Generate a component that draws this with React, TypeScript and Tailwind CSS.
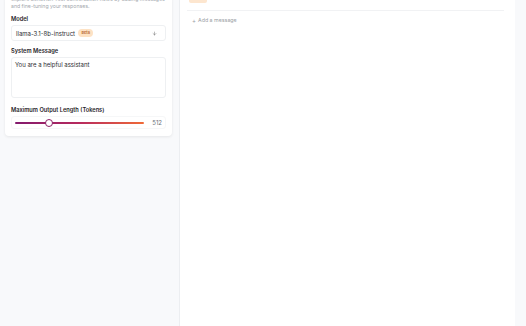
import { ArrowDown } from 'lucide-react';

const font = { fontFamily: 'Inter, "Noto Sans", sans-serif' };

function Label({ children }: { children: string }) {
  return <h3 className="text-[5.7px] font-semibold leading-[8px] text-[#1f2328]">{children}</h3>;
}

function SettingsCard() {
  return (
    <section className="ml-[5px] w-[167px] rounded-[4px] bg-white px-[6px] pb-[7px] shadow-[0_1px_3px_rgba(0,0,0,0.08)]">
      <p className="-mt-[4px] text-[5.2px] leading-[6.5px] text-[#a3a7ad]">
        explore behavior. Test conversation flows by adding messages and fine-tuning your responses.
      </p>
      <div className="mt-[6px]">
        <Label>Model</Label>
        <div className="mt-[2px] flex h-[16px] items-center rounded-[3px] border border-[#eef0f2] pl-[4px] pr-[8px]">
          <span className="text-[6px] text-[#2a2d31]">llama-3.1-8b-instruct</span>
          <span className="ml-[3px] rounded-full bg-[#fde2c4] px-[3.5px] py-[1px] text-[3.8px] font-semibold text-[#b4622a]">
            Beta
          </span>
          <ArrowDown className="ml-auto text-[#555]" size={5} strokeWidth={2} />
        </div>
      </div>
      <div className="mt-[6px]">
        <Label>System Message</Label>
        <div className="mt-[2px] h-[41px] rounded-[3px] border border-[#eef0f2] px-[3px] pt-[3px] text-[6px] leading-[7px] text-[#2a2d31]">
          You are a helpful assistant
        </div>
      </div>
      <div className="mt-[8px]">
        <Label>Maximum Output Length (Tokens)</Label>
        <div className="mt-[2px] flex h-[13px] items-center rounded-[3px] border border-[#f6f7f8] pl-[3px] pr-[3px]">
          <div className="relative h-[2px] w-[129px] rounded-full bg-[linear-gradient(90deg,#821a6e,#b72a5e_50%,#f06a37)]">
            <div className="absolute -top-[3px] left-[30px] h-[8px] w-[8px] rounded-full border border-[#8c2066] bg-white" />
          </div>
          <span className="ml-auto text-[6px] text-[#6b7077]">512</span>
        </div>
      </div>
    </section>
  );
}

export default function App() {
  return (
    <div style={font} className="flex h-[326px] w-[526px] overflow-hidden bg-[#f8f9fb]">
      <aside className="w-[180px] flex-none border-r border-[#eceef1]">
        <SettingsCard />
      </aside>
      <main className="flex w-[335px] flex-none flex-col bg-white pl-[7px] pr-[11px]">
        <div className="ml-[2px] h-[3px] w-[18px] rounded-b-[2px] bg-[#fde6cf]" />
        <div className="mt-[7px] border-t border-[#f1f2f4]" />
        <button className="mt-[5px] flex items-center gap-[2px] pl-[5px] text-[5.3px] text-[#9a9ea4]">
          <span className="text-[6px]">+</span>
          <span>Add a message</span>
        </button>
      </main>
    </div>
  );
}
